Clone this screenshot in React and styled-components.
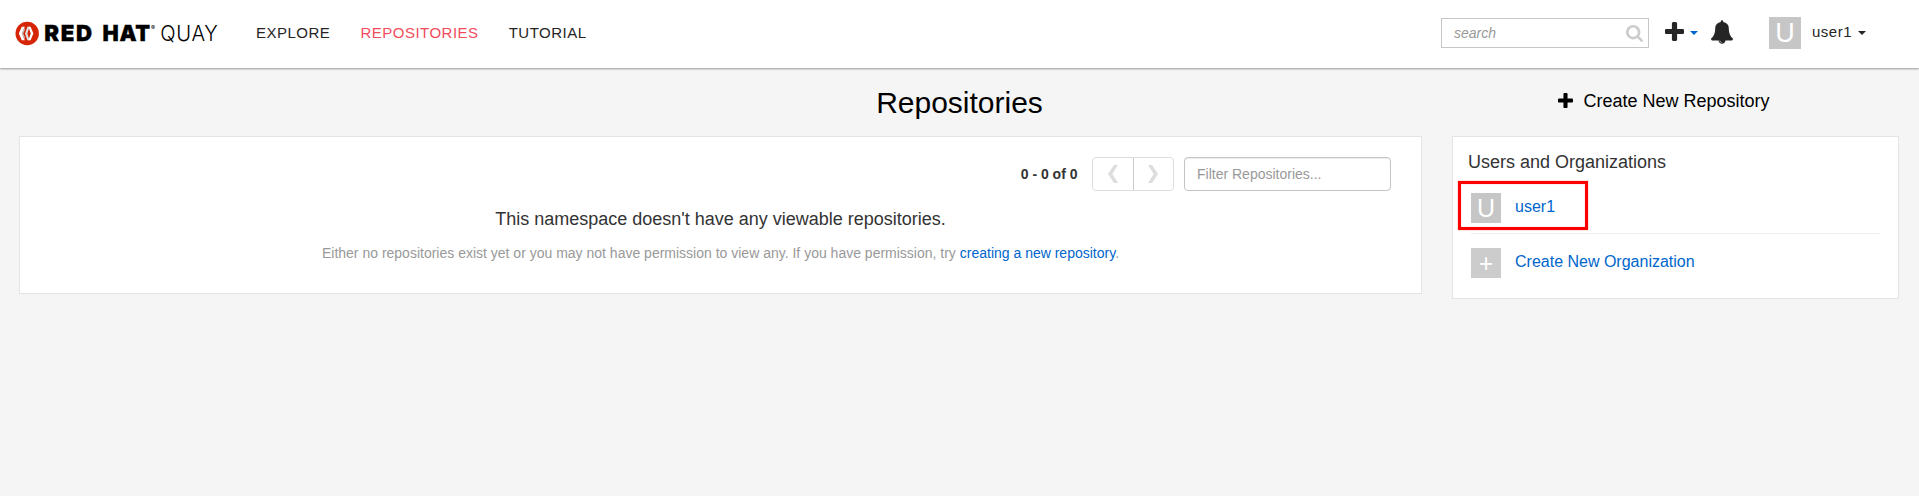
import React from "react";
import styled, { createGlobalStyle } from "styled-components";

const GlobalStyle = createGlobalStyle`
  * { box-sizing: border-box; }
  body {
    margin: 0;
    min-height: 100vh;
    background: #f5f5f5;
    color: #333;
    font: 14px/20px "Liberation Sans", Arial, sans-serif;
  }
  a { color: #0066cc; text-decoration: none; }
`;

const Header = styled.header`
  display: flex;
  align-items: flex-start;
  height: 68px;
  padding-left: 15px;
  background: #fff;
  box-shadow: 0 1px 2px rgba(0, 0, 0, 0.38);
`;

const Logo = styled.svg`
  display: block;
  flex: none;
  width: 210px;
  height: 68px;
`;

const Nav = styled.nav`
  display: flex;
  gap: 30px;
  padding: 23px 0 0 31px;
`;

const NavLink = styled.a`
  color: ${(p) => (p.$active ? "#f04c5c" : "#252525")};
  font-size: 15px;
  line-height: 19px;
  letter-spacing: 0.5px;
  text-transform: uppercase;
`;

const HeaderTools = styled.div`
  display: flex;
  align-items: flex-start;
  margin-left: auto;
  padding-right: 53px;
`;

const SearchBox = styled.label`
  display: flex;
  align-items: center;
  width: 208px;
  height: 30px;
  margin-top: 18px;
  padding: 0 5px 0 12px;
  border: 1px solid #c6c6c6;
`;

const SearchInput = styled.input`
  flex: 1;
  min-width: 0;
  padding: 0;
  border: 0;
  outline: 0;
  background: none;
  font: italic 14px/20px "Liberation Sans", Arial, sans-serif;
  &::placeholder { color: #999; opacity: 1; }
`;

const Icon = styled.svg`
  display: block;
  flex: none;
  width: ${(p) => p.$w}px;
  height: ${(p) => p.$h}px;
  fill: ${(p) => p.$color || "#252525"};
`;

const NewMenu = styled.div`
  display: flex;
  align-items: center;
  gap: 6px;
  margin: 22px 0 0 16px;
`;

const Caret = styled.span`
  width: 0;
  height: 0;
  border-top: 4px solid ${(p) => p.$color};
  border-left: 4px solid transparent;
  border-right: 4px solid transparent;
`;

const MenuCaret = styled(Caret)`
  margin-top: 2px;
`;

const BellButton = styled.div`
  margin: 20px 0 0 13px;
`;

const UserMenu = styled.div`
  display: flex;
  margin: 17px 0 0 36px;
`;

const UserName = styled.span`
  margin: 5px 6px 0 11px;
  color: #252525;
  font-size: 15px;
  line-height: 19px;
  letter-spacing: 0.5px;
`;

const UserCaret = styled(Caret)`
  margin-top: 14px;
`;

const Avatar = styled.span`
  display: flex;
  flex: none;
  justify-content: center;
  width: ${(p) => p.$size}px;
  height: ${(p) => p.$size}px;
  background: ${(p) => p.$bg || "#c6c6c6"};
  color: #fff;
  font-size: ${(p) => p.$font}px;
  line-height: ${(p) => p.$size}px;
`;

const TitleBar = styled.div`
  display: grid;
  grid-template-columns: 1fr auto 1fr;
  height: 68px;
  padding: 0 19px;
`;

const Title = styled.h1`
  grid-column: 2;
  margin: 14px 0 0;
  color: #000;
  font-size: 30px;
  font-weight: 400;
  line-height: 41px;
`;

const CreateRepo = styled.a`
  display: flex;
  gap: 10.5px;
  justify-self: end;
  margin: 21px 130.5px 0 0;
  color: #000;
  font-size: 18px;
  line-height: 24px;
`;

const CreateIcon = styled(Icon)`
  margin-top: 4px;
`;

const Columns = styled.main`
  display: flex;
  align-items: flex-start;
  gap: 30px;
  padding: 0 20px 0 19px;
`;

const Panel = styled.section`
  border: 1px solid #e4e4e4;
  background: #fff;
`;

const RepoPanel = styled(Panel)`
  flex: 1;
  height: 158px;
  padding: 20px 30px 0;
`;

const SidePanel = styled(Panel)`
  flex: none;
  width: 447px;
  height: 163px;
  padding: 15px 18px 0;
`;

const Toolbar = styled.div`
  display: flex;
  align-items: center;
  justify-content: flex-end;
`;

const Count = styled.strong`
  margin-right: 14.5px;
`;

const Pager = styled.div`
  display: flex;
  width: 82px;
  height: 34px;
  margin-right: 10px;
  border: 1px solid #dedede;
  border-radius: 4px;
`;

const PagerButton = styled.button`
  display: flex;
  flex: 1;
  align-items: center;
  justify-content: center;
  padding: 0;
  border: 0;
  background: none;
  & + & { border-left: 1px solid #ccc; }
`;

const FilterInput = styled.input`
  width: 207px;
  height: 34px;
  padding: 6px 12px;
  border: 1px solid #c4c4c4;
  border-radius: 4px;
  background: #fff;
  box-shadow: inset 0 1px 1px rgba(0, 0, 0, 0.075);
  font: 14px/20px "Liberation Sans", Arial, sans-serif;
  &::placeholder { color: #999; opacity: 1; }
`;

const EmptyTitle = styled.h2`
  margin: 16px 0 0;
  font-size: 18px;
  font-weight: 400;
  line-height: 24px;
  text-align: center;
`;

const EmptyText = styled.p`
  margin: 12px 0 0;
  color: #999;
  text-align: center;
`;

const SideTitle = styled.h3`
  margin: 0 0 0 -3px;
  font-size: 18px;
  font-weight: 400;
  line-height: 20px;
`;

const OrgList = styled.ul`
  margin: 0;
  padding: 0;
  list-style: none;
`;

const OrgRow = styled.li`
  position: relative;
  display: flex;
  gap: 14px;
  height: 61px;
  padding-top: 21px;
  font-size: 16px;
  line-height: 27px;
  & + & { height: 60px; padding-top: 14px; border-top: 1px solid #eee; }
`;

const Highlight = styled.span`
  position: absolute;
  top: 9px;
  left: -13px;
  width: 130px;
  height: 49px;
  border: 3px solid #f00;
  box-shadow: 0 0 1px rgba(255, 0, 0, 0.6), inset 0 0 1px rgba(255, 0, 0, 0.6);
  pointer-events: none;
`;

const PlusIcon = ({ size, color, as: Component = Icon }) => (
  <Component $w={size} $h={size} $color={color} viewBox="192 128 1408 1408">
    <path d="M1600 736v192q0 40-28 68t-68 28h-416v416q0 40-28 68t-68 28h-192q-40 0-68-28t-28-68v-416h-416q-40 0-68-28t-28-68v-192q0-40 28-68t68-28h416v-416q0-40 28-68t68-28h192q40 0 68 28t28 68v416h416q40 0 68 28t28 68z" />
  </Component>
);

const QuayLogo = () => (
  <Logo viewBox="15 0 210 68">
    <circle cx="27.2" cy="33.5" r="11.7" fill="#d62406" />
    <path d="M21.8 26.8h3L21.9 33.5l2.9 6.7h-3L18.8 33.5z" fill="#fff" />
    <path d="M25 29.6l-1.8 3.9 1.8 3.9-.8 1.5-2.3-5.4 2.3-5.4z" fill="#c4c4c4" />
    <path d="M27.4 26.8h2.2L27.4 33.5l2.2 6.7h-2.2L25 33.5z" fill="#ddd" />
    <path d="M28.4 26.8h2.2l2.8 6.7-2.8 6.7h-2.2L30.8 33.5z" fill="#fff" />
    <g fontFamily="Inter, sans-serif" fill="#000">
      <text x="44.3" y="41.2" fontSize="22" fontWeight="900" stroke="#000" strokeWidth="0.3" letterSpacing="1.6" textLength="49.4" lengthAdjust="spacingAndGlyphs">RED</text>
      <text x="102.4" y="41.2" fontSize="22" fontWeight="900" stroke="#000" strokeWidth="0.3" letterSpacing="0.8" textLength="48.6" lengthAdjust="spacingAndGlyphs">HAT</text>
      <text x="151" y="29.5" fontSize="6">®</text>
      <text x="160.2" y="41.2" fontSize="21.5" fontWeight="300" letterSpacing="0.8" textLength="58.3" lengthAdjust="spacingAndGlyphs">QUAY</text>
    </g>
  </Logo>
);

export default function App() {
  return (
    <>
      <GlobalStyle />
      <Header>
        <QuayLogo />
        <Nav>
          <NavLink>Explore</NavLink>
          <NavLink $active>Repositories</NavLink>
          <NavLink>Tutorial</NavLink>
        </Nav>
        <HeaderTools>
          <SearchBox>
            <SearchInput placeholder="search" />
            <Icon $w={17} $h={17} $color="#ccc" viewBox="64 128 1664 1664">
              <path d="M1216 832q0-185-131.5-316.5t-316.5-131.5-316.5 131.5-131.5 316.5 131.5 316.5 316.5 131.5 316.5-131.5 131.5-316.5zm512 832q0 52-38 90t-90 38q-54 0-90-38l-343-342q-179 124-399 124-143 0-273.5-55.5t-225-150-150-225-55.5-273.5 55.5-273.5 150-225 225-150 273.5-55.5 273.5 55.5 225 150 150 225 55.5 273.5q0 220-124 399l343 343q37 37 37 90z" />
            </Icon>
          </SearchBox>
          <NewMenu>
            <PlusIcon size={19} />
            <MenuCaret $color="#0066cc" />
          </NewMenu>
          <BellButton>
            <Icon $w={22} $h={24} viewBox="64 0 1664 1792">
              <path d="M912 1696q0-16-16-16-59 0-101.5-42.5t-42.5-101.5q0-16-16-16t-16 16q0 73 51.5 124.5t124.5 51.5q16 0 16-16zm816-288q0 52-38 90t-90 38h-448q0 106-75 181t-181 75-181-75-75-181h-448q-52 0-90-38t-38-90q50-42 91-88t85-119.5 74.5-158.5 50-206 19.5-260q0-152 117-282.5t307-158.5q-8-19-8-39 0-40 28-68t68-28 68 28 28 68q0 20-8 39 190 28 307 158.5t117 282.5q0 139 19.5 260t50 206 74.5 158.5 85 119.5 91 88z" />
            </Icon>
          </BellButton>
          <UserMenu>
            <Avatar $size={32} $font={27}>U</Avatar>
            <UserName>user1</UserName>
            <UserCaret $color="#252525" />
          </UserMenu>
        </HeaderTools>
      </Header>
      <TitleBar>
        <Title>Repositories</Title>
        <CreateRepo>
          <PlusIcon size={15} color="#000" as={CreateIcon} />
          Create New Repository
        </CreateRepo>
      </TitleBar>
      <Columns>
        <RepoPanel>
          <Toolbar>
            <Count>0 - 0 of 0</Count>
            <Pager>
              <PagerButton aria-label="Previous">
                <Icon $w={10} $h={18} $color="#ddd" viewBox="0 0 10 18">
                  <path d="M6 0h4L4.3 9 10 18H6L0 9z" />
                </Icon>
              </PagerButton>
              <PagerButton aria-label="Next">
                <Icon $w={10} $h={18} $color="#ddd" viewBox="0 0 10 18">
                  <path d="M4 0H0l5.7 9L0 18h4l6-9z" />
                </Icon>
              </PagerButton>
            </Pager>
            <FilterInput placeholder="Filter Repositories..." />
          </Toolbar>
          <EmptyTitle>This namespace doesn't have any viewable repositories.</EmptyTitle>
          <EmptyText>
            Either no repositories exist yet or you may not have permission to view any. If you have permission, try <a>creating a new repository</a>.
          </EmptyText>
        </RepoPanel>
        <SidePanel>
          <SideTitle>Users and Organizations</SideTitle>
          <OrgList>
            <OrgRow>
              <Avatar $size={30} $font={25}>U</Avatar>
              <a>user1</a>
              <Highlight />
            </OrgRow>
            <OrgRow>
              <Avatar $size={30} $font={25} $bg="#ccc">+</Avatar>
              <a>Create New Organization</a>
            </OrgRow>
          </OrgList>
        </SidePanel>
      </Columns>
    </>
  );
}
